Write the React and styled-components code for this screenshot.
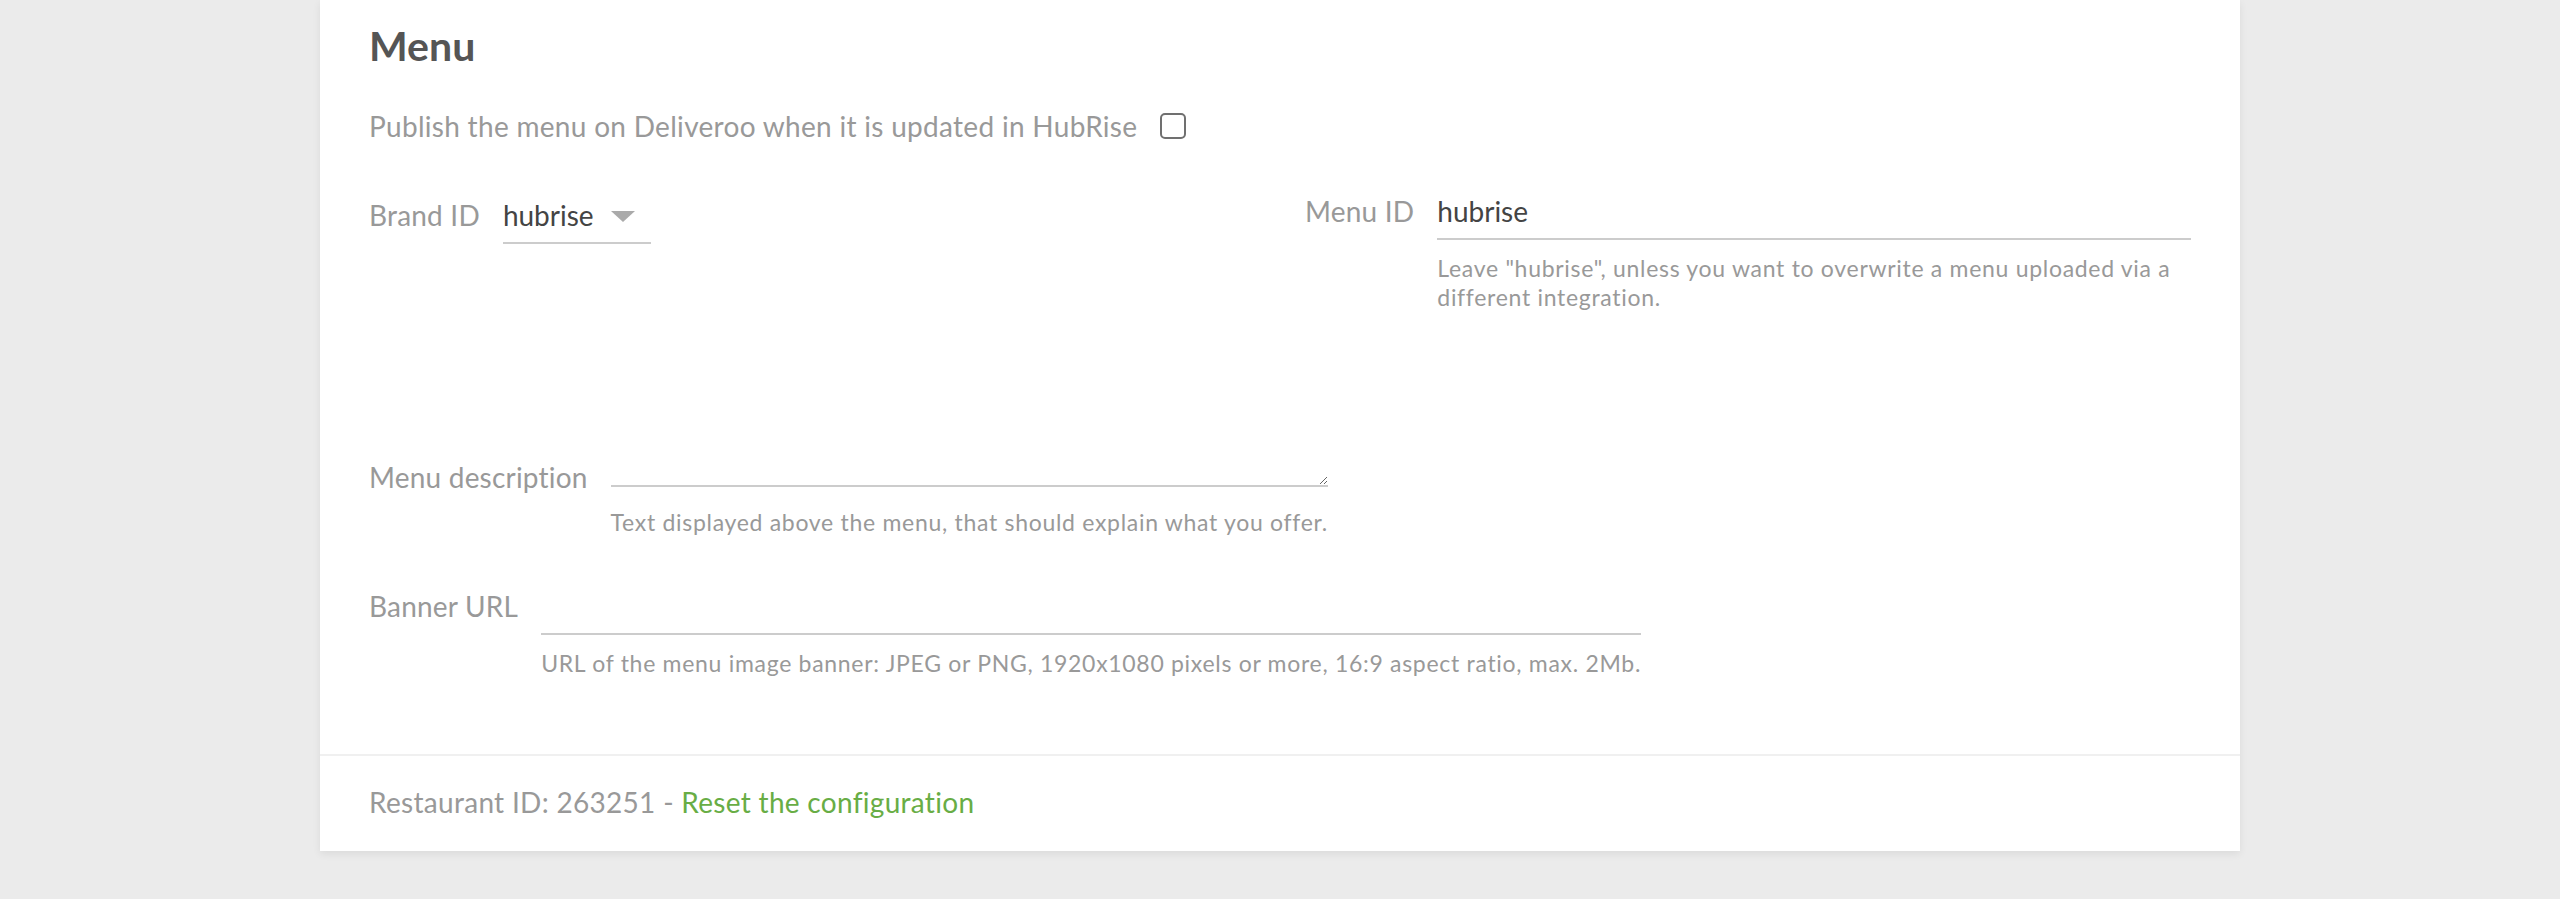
import React from "react";
import styled, { createGlobalStyle } from "styled-components";

const GlobalStyle = createGlobalStyle`
    * {
        box-sizing: border-box;
    }

    body {
        margin: 0;
        background-color: #ebebeb;
        font-family: Lato, "Open Sans", sans-serif;
    }
`;

const App = () => {
    return (
        <>
            <GlobalStyle />
            <StPage>
                <StCard>
                    <StSection>
                        <StTitle>Menu</StTitle>

                        <StCheckRow>
                            <span>Publish the menu on Deliveroo when it is updated in HubRise</span>
                            <StCheckbox type="checkbox" />
                        </StCheckRow>

                        <StColumns>
                            <StField offset={4}>
                                <StLabel>Brand ID</StLabel>
                                <StControl>
                                    <StSelect>
                                        <span>hubrise</span>
                                        <svg width="24" height="11" viewBox="0 0 24 11">
                                            <path d="M0 0 H24 L12 11 Z" fill="#aaa" />
                                        </svg>
                                    </StSelect>
                                </StControl>
                            </StField>

                            <StField>
                                <StLabel>Menu ID</StLabel>
                                <StControl grow>
                                    <StInput type="text" defaultValue="hubrise" />
                                    <StHelp>
                                        Leave "hubrise", unless you want to overwrite a menu uploaded via a different integration.
                                    </StHelp>
                                </StControl>
                            </StField>
                        </StColumns>

                        <StField gap={148}>
                            <StLabel>Menu description</StLabel>
                            <StControl>
                                <StTextarea />
                                <StHelp space={21}>Text displayed above the menu, that should explain what you offer.</StHelp>
                            </StControl>
                        </StField>

                        <StField gap={52}>
                            <StLabel>Banner URL</StLabel>
                            <StControl>
                                <StInput type="text" />
                                <StHelp>
                                    URL of the menu image banner: JPEG or PNG, 1920x1080 pixels or more, 16:9 aspect ratio, max. 2Mb.
                                </StHelp>
                            </StControl>
                        </StField>
                    </StSection>

                    <StFooter>
                        Restaurant ID: 263251 - <StLink href="#">Reset the configuration</StLink>
                    </StFooter>
                </StCard>
            </StPage>
        </>
    );
};

export default App;

const StPage = styled.div`
    min-height: 100vh;
    padding-bottom: 48px;
`;

const StCard = styled.div`
    width: 1920px;
    margin: 0 auto;
    background-color: #fff;
    box-shadow: 0 3px 8px rgba(0, 0, 0, 0.07);
`;

const StSection = styled.div`
    padding: 21px 49px 76px;
`;

const StTitle = styled.h2`
    margin: 0;
    font-size: 41px;
    line-height: 50px;
    font-weight: 700;
    color: #555;
`;

const StCheckRow = styled.label`
    margin-top: 35px;
    height: 40px;
    display: flex;
    align-items: center;
    gap: 23px;

    font-size: 28px;
    line-height: 40px;
    letter-spacing: 0.3px;
    color: #999;
`;

const StCheckbox = styled.input`
    appearance: none;
    margin: 0;
    width: 26px;
    height: 26px;
    border: 2px solid #707070;
    border-radius: 5px;
    background: #fff;
`;

const StColumns = styled.div`
    margin-top: 48px;
    display: grid;
    grid-template-columns: 1fr 1fr;
    column-gap: 50px;
    align-items: start;
`;

const StField = styled.div`
    margin-top: ${(props) => (props.gap || 0) + (props.offset || 0)}px;
    display: flex;
    align-items: flex-start;
`;

const StLabel = styled.div`
    flex-shrink: 0;
    margin-right: 23px;
    font-size: 28px;
    line-height: 34px;
    letter-spacing: 0.2px;
    color: #999;
    white-space: nowrap;
`;

const StControl = styled.div`
    flex: ${(props) => (props.grow ? "1 1 auto" : "0 1 auto")};
    min-width: 0;
    display: flex;
    flex-direction: column;
`;

const StInput = styled.input`
    width: 100%;
    height: 46px;
    margin: 0;
    padding: 0 0 10px;
    border: none;
    border-bottom: 2px solid #ccc;
    outline: none;
    background: transparent;

    font-family: inherit;
    font-size: 28px;
    line-height: 34px;
    color: #444;
`;

const StSelect = styled.div`
    width: 148px;
    height: 46px;
    padding: 0 16px 10px 0;
    border-bottom: 2px solid #ccc;
    display: flex;
    justify-content: space-between;
    align-items: flex-start;

    font-size: 28px;
    line-height: 34px;
    color: #444;

    svg {
        margin-top: 13px;
    }
`;

const StTextarea = styled.textarea`
    display: block;
    width: 100%;
    height: 27px;
    margin: 0;
    padding: 0;
    border: none;
    border-bottom: 2px solid #ccc;
    outline: none;
    background: transparent;

    font-family: inherit;
    font-size: 28px;
    color: #444;
`;

const StHelp = styled.div`
    margin-top: ${(props) => props.space || 14}px;
    font-size: 23px;
    line-height: 29px;
    letter-spacing: 0.7px;
    color: #999;
`;

const StFooter = styled.div`
    border-top: 2px solid #f0f0f0;
    padding: 29px 49px 32px;
    font-size: 28px;
    line-height: 34px;
    letter-spacing: 0.3px;
    color: #999;
`;

const StLink = styled.a`
    color: #68ad45;
    text-decoration: none;
`;
